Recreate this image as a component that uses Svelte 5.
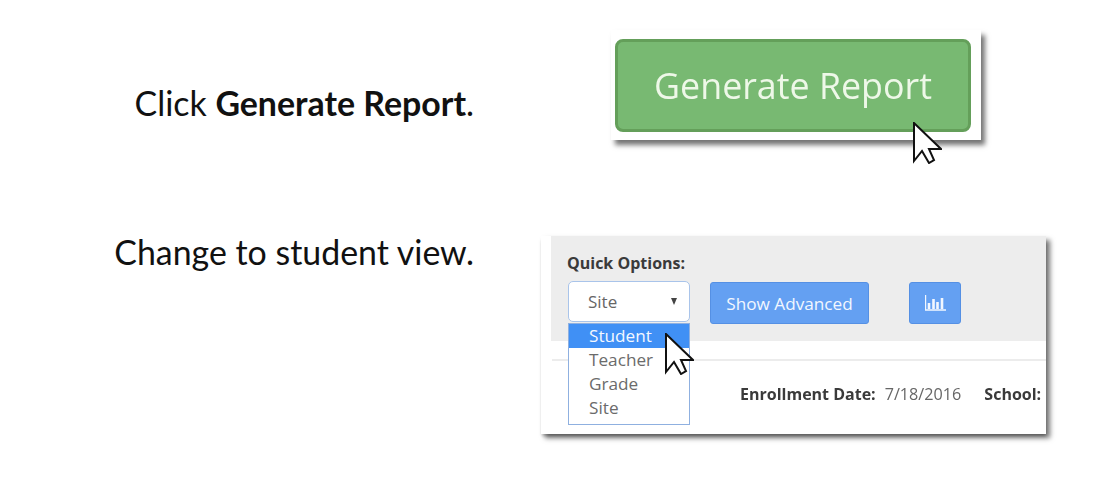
<script>
  const options = ['Student', 'Teacher', 'Grade', 'Site'];
</script>

<main class="page">
  <section class="row first">
    <p class="caption click">Click <b>Generate Report</b>.</p>
    <div class="shot report">
      <button class="generate">Generate Report</button>
      <svg class="cursor" viewBox="0 0 29 42" width="29" height="42"><path d="M1 1V39L9 29L16 41L21 38L16 27H28Z" /></svg>
    </div>
  </section>

  <section class="row second">
    <p class="caption change">Change to student view.</p>
    <div class="shot options">
      <div class="panel">
        <div class="label">Quick Options:</div>
        <div class="controls">
          <div class="select"><span>Site</span><i></i></div>
          <button class="blue advanced">Show Advanced</button>
          <button class="blue chart" aria-label="Chart">
            <svg viewBox="0 0 21 16" width="21" height="16">
              <path class="axis" d="M.5 0V15H21" />
              <path class="bars" d="M4 14V8M8.5 14V4M12.5 14V7M17 14V3" />
            </svg>
          </button>
        </div>
      </div>
      <div class="rule"></div>
      <div class="details">
        <b>Enrollment Date:</b><span class="date">7/18/2016</span><b class="school">School:</b>
      </div>
      <ul class="menu">
        {#each options as option, i}
          <li class:active={i === 0}>{option}</li>
        {/each}
      </ul>
      <svg class="cursor" viewBox="0 0 29 42" width="29" height="42"><path d="M1 1V39L9 29L16 41L21 38L16 27H28Z" /></svg>
    </div>
  </section>
</main>

<style>
  :global(body) { margin: 0; background: #fff; overflow: hidden; }
  .page { width: 1112px; height: 478px; box-sizing: border-box; padding-top: 30px; font-family: "Open Sans", sans-serif; }
  .row { display: grid; grid-template-columns: 474px auto; justify-content: start; align-items: start; }
  .first { height: 206px; column-gap: 137px; }
  .second { column-gap: 67px; }
  .caption { margin: 0; text-align: right; font: 33.9px/40px Lato, "Open Sans", sans-serif; color: #111; }
  .click { padding-top: 53px; }
  .change { margin-top: -4px; }
  .shot { position: relative; background: #fff; filter: blur(0.4px); box-shadow: 4px 5px 5px rgba(0,0,0,.55); }
  .report { width: 370px; height: 110px; box-sizing: border-box; padding: 9px 10px 8px 4px; }
  .generate { width: 100%; height: 100%; box-sizing: border-box; background: #78b972; border: 3px solid #649f5a; border-radius: 8px; color: #eef8e8; font: 35.8px "Open Sans", sans-serif; padding: 0 0 2px; }
  .cursor { position: absolute; }
  .cursor path { fill: #fff; stroke: #111; stroke-width: 2; stroke-linejoin: miter; }
  .report .cursor { left: 302px; top: 92px; }
  .options { width: 505px; height: 198px; box-sizing: border-box; padding-left: 10px; box-shadow: 4px 4px 5px rgba(0,0,0,.55), 0 3px 3px -1px rgba(0,0,0,.25); }
  .panel { background: #ededed; height: 105px; box-sizing: border-box; padding: 17px 0 0 16px; }
  .label { font-size: 16px; font-weight: 700; line-height: 20px; color: #3a3a3a; margin-bottom: 8px; }
  .controls { display: flex; align-items: flex-start; margin-left: 1px; }
  .select { width: 122px; height: 41px; box-sizing: border-box; background: #fff; border: 1px solid #a9c4ea; border-radius: 5px; padding: 0 12px 0 19px; display: flex; align-items: center; justify-content: space-between; color: #666; font-size: 17px; }
  .select i { width: 0; height: 0; border-left: 3.5px solid transparent; border-right: 3.5px solid transparent; border-top: 7px solid #444; }
  .blue { height: 42px; margin-top: 1px; box-sizing: border-box; background: #64a0f2; border: 1px solid #5590e4; border-radius: 3px; color: #f2f7ff; font: 17.2px "Open Sans", sans-serif; padding: 0; }
  .advanced { width: 159px; margin-left: 20px; }
  .chart { width: 52px; margin-left: 40px; display: flex; align-items: center; justify-content: center; }
  .chart path { fill: none; stroke: #f2f7ff; }
  .axis { stroke-width: 1.4; }
  .bars { stroke-width: 2.6; }
  .rule { height: 2px; background: #ececec; margin: 18px 0 0 1px; }
  .details { display: flex; align-items: baseline; padding: 22px 0 0 189px; font-size: 16px; line-height: 22px; color: #666; white-space: nowrap; }
  .details b { color: #3a3a3a; }
  .date { margin-left: 9px; font-size: 16.2px; }
  .school { margin-left: 23px; }
  .menu { position: absolute; left: 27px; top: 87px; width: 122px; height: 102px; box-sizing: border-box; margin: 0; padding: 0; list-style: none; background: #fff; border: 1px solid #8fb0e0; font-size: 17.2px; line-height: 23px; color: #6b6b6b; }
  .menu li { padding: 0 0 1px 20px; }
  .menu .active { background: #4090f5; color: #f4f8ff; }
  .options .cursor { left: 124px; top: 97px; }
</style>
